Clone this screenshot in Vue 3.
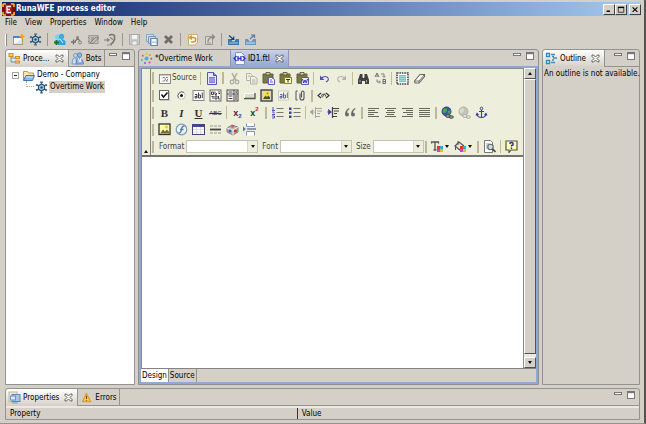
<script setup>
import { ref } from 'vue'

const icons = {
  app: '<rect width="13" height="13" fill="#7c0a10"/><path d="M1 1h3M9 1h3M1 12h3M9 12h3M1 1v3M12 1v3M1 9v3M12 9v3" stroke="#f0c030" stroke-width="1.6"/><rect x="3" y="2" width="7" height="9" fill="#c4141c"/><path d="M9 3.5H5v6h4M5 6.5h3" stroke="#fff" fill="none" stroke-width="1.3"/>',
  newfile: '<rect x="1.5" y="3.5" width="9" height="8" fill="#f4f8fd" stroke="#a89a68"/><path d="M1 4h8" stroke="#4c86c8" stroke-width="2"/><path d="M10 1v5M7.5 3.5h5" stroke="#e8a020" stroke-width="1.6"/><path d="M2 11L10 6v5z" fill="#d5e6f7"/>',
  gear: '<path d="M6.500 1v11M1.500 3.700l10 5.600M11.500 3.700l-10 5.600" stroke="#2c5878" stroke-width="1.100"/><path d="M6.500 3l3 1.700v3.600l-3 1.700-3-1.700V4.700z" fill="#a8c8dc" stroke="#24506f" stroke-width="1.200"/><circle cx="6.500" cy="6.500" r="1.200" fill="#24506f"/><path d="M5 1.200h3M5 11.800h3M1.200 5l1-2M10.800 3l1 2M1.200 8l1 2M10.800 10l1-2" stroke="#3c6c8c" stroke-width="1.200"/>',
  botadd: '<circle cx="4.500" cy="4" r="2.600" fill="#7fd0ee"/><circle cx="8.500" cy="3.500" r="2.700" fill="#38aee0"/><path d="M1 11V8q3-4 6 0v3z" fill="#8fd8f2"/><path d="M5 12V8q3-4 7.500 0v4z" fill="#2ea4dc"/><path d="M7 6l3 4" stroke="#dff5ff"/><path d="M3.500 7v5M1 9.500h5" stroke="#187828" stroke-width="2"/>',
  botplus: '<circle cx="7.500" cy="4.500" r="1.500" fill="#85827c"/><path d="M5 8l2.500-2 2.500 1.500M3.500 6.500v5M1 9h5" stroke="#77746e" stroke-width="1.300" fill="none"/><circle cx="10" cy="9.500" r="1.500" fill="none" stroke="#85827c"/>',
  chip: '<path d="M2 2.500h9v8H2z" fill="#c4c1ba" stroke="#9e9b95" stroke-width="1.200"/><path d="M3 10l6-6 2.500 1-5.500 5.500zM4 5h3M4 7h2" stroke="#85827c" fill="none"/><path d="M1 4.500h1M1 8.500h1M11 4.500h1" stroke="#8e8b85"/>',
  person: '<path d="M5 2.500q3-2 5.500 0v4q-1 3-4 5" stroke="#77746e" stroke-width="1.600" fill="none"/><path d="M0 7h5M3 5.500l2 1.500-2 1.500M6 4.500l3 2" stroke="#85827c" stroke-width="1.200" fill="none"/><path d="M3 12h5" stroke="#8e8b85"/>',
  save: '<path d="M1.500 1.500h10v10h-10z" fill="#c9c8c8" stroke="#a9a9ac"/><path d="M4 2h5v4H4z" fill="#f4f4f4"/><path d="M4 8h5v4H4z" fill="#eeeeee" stroke="#aaa" stroke-width=".6"/>',
  saveall: '<path d="M1.500 1.500h7v7h-7z" fill="#d9e2ea" stroke="#91a5b8"/><path d="M3.500 3.500h7v7h-7z" fill="#ccd9e4" stroke="#7896b0"/><path d="M5.500 5.500h7v7h-7z" fill="#b4c9da" stroke="#6488a8"/><path d="M7 6h4v2.500H7zM7 10h4v2H7z" fill="#fff"/>',
  cross: '<path d="M3 3l7 7M10 3l-7 7" stroke="#706d68" stroke-width="2.800"/>',
  undoDoc: '<path d="M2.500 1.500h9v8l-3 2.500h-6z" fill="#fffdf0" stroke="#c2b078"/><path d="M4 4.500h3.500a2 2 0 0 1 0 4.500H5M6 2.500L3.500 4.500 6 6.500" stroke="#d89a18" stroke-width="1.500" fill="none"/>',
  redoDoc: '<path d="M2.500 3.500h7v8h-7z" fill="#d9d6cf" stroke="#9b9892"/><path d="M5 9c0-4 2-5 6-5M9 1.500L11.500 4 9 6.500" stroke="#8e8b85" stroke-width="1.300" fill="none"/><path d="M4 10h4" stroke="#9b9892"/>',
  importT: '<path d="M1 6h3l1.500 2.500h2L9 6h3v6H1z" fill="#3c78b0"/><path d="M2 10h9" stroke="#a8c8e4"/><path d="M2 2.500l4 3.500M6.800 3.500v3H4" stroke="#203c68" stroke-width="1.200" fill="none"/>',
  exportT: '<path d="M1 6h3l1.500 2.500h2L9 6h3v6H1z" fill="#6c98c0"/><path d="M2 10h9" stroke="#d0e0ee"/><path d="M6 6l4-3.500M7 2h3.500v3" stroke="#5a7898" stroke-width="1.200" fill="none"/>',
  process: '<path d="M3 4v6h5M3 6h5" stroke="#6a8fb0" fill="none"/><rect x="1" y="1.500" width="4" height="3" fill="#f8cc70" stroke="#d08c28"/><rect x="7.500" y="4.500" width="4" height="2" fill="#f8cc70" stroke="#d08c28"/><rect x="7.500" y="9" width="4" height="2" fill="#f8cc70" stroke="#d08c28"/>',
  bots: '<circle cx="4.500" cy="3.500" r="2" fill="#bcd4ee" stroke="#7498c4"/><circle cx="8.500" cy="3" r="2.200" fill="#8eb4e0" stroke="#5c86bc"/><path d="M1 12q0-7 4-6l1 6z" fill="#cfe0f4" stroke="#7498c4"/><path d="M5 12q0-7 4-6 3 1 3.500 6z" fill="#8eb4e0" stroke="#5c86bc"/><path d="M7 6l2 4 1-4" stroke="#fff" fill="none"/>',
  sun: '<circle cx="6.500" cy="6.500" r="2" fill="#38b8e8"/><circle cx="6.500" cy="1.800" r="1" fill="#e8c020"/><circle cx="10" cy="3" r="1" fill="#f09030"/><circle cx="11.300" cy="6.800" r="1" fill="#e84848"/><circle cx="9.500" cy="10.500" r="1" fill="#c848b8"/><circle cx="5" cy="11" r="1" fill="#6868e0"/><circle cx="1.800" cy="8" r="1" fill="#48b0e0"/><circle cx="2.800" cy="3.800" r="1" fill="#e85858"/>',
  ftl: '<path d="M2.500.5h6l3 3v9h-9z" fill="#f6f8ff" stroke="#8894b8"/><path d="M3.500 4L1 6.500 3.500 9M9.500 4L12 6.500 9.500 9M5 4v5M8 4v5M5 6.500h3" stroke="#3030c8" stroke-width="1.300" fill="none"/>',
  outline: '<path d="M1.500 1.500h3v3h-3zM1.500 8.500h3v3h-3z" fill="#e8f4fc" stroke="#3088c0" stroke-width="1.300"/><path d="M6 2.500h4M8 6h4M6 10.500h4M7 4.500h2M7 8h2" stroke="#3e90c4" stroke-width="1.400"/>',
  props: '<rect x="1" y="1" width="8" height="10" fill="#f4ecc8" stroke="#c4b888"/><rect x="4" y="3.500" width="8" height="7" fill="#a8c8ea" stroke="#5888bc"/><rect x="2.500" y="5" width="5" height="4" fill="#d8e8f8" stroke="#6898c8"/><path d="M4 12h6" stroke="#7ca4cc"/>',
  warn: '<path d="M6.500 2.500L10.500 10.500h-8z" fill="#fcd468" stroke="#e0a038" stroke-width="1.600" stroke-linejoin="round"/><path d="M6.500 5v3M6.500 8.800v1" stroke="#86500c" stroke-width="1.200"/>',
  folder: '<path d="M1.500 11V2.500h4l1 1.500h5v3" fill="#fce8a8" stroke="#b89848"/><path d="M1.500 11.500l2.500-5h8.500l-2 5z" fill="#8cb8ec" stroke="#4474b0"/><path d="M4 8h7" stroke="#d8ecfc"/>',
  source: '<rect x=".5" y="2.500" width="11" height="9" fill="#fafaf4" stroke="#888"/><path d="M1 3h10" stroke="#999"/><path d="M3.500 5.500h2l1 1.500-1 2h-2M7 5.500h2M9 7l-2 2h2" stroke="#888" fill="none"/>',
  page: '<path d="M2.500.5h6l3 3v9h-9z" fill="#e8e8ff" stroke="#5858b8"/><path d="M8.500.5v3h3" fill="#9c9ce8" stroke="#4848b8"/><path d="M4 5h6v6H4z" fill="#7c7cdc"/><path d="M4 7h6M4 9h6" stroke="#b4b4f0"/>',
  cut: '<path d="M4 1l4 7.500M9 1L5 8.500" stroke="#aaa99e" stroke-width="1.400"/><circle cx="4" cy="10" r="1.800" fill="none" stroke="#aaa99e" stroke-width="1.200"/><circle cx="9" cy="10" r="1.800" fill="none" stroke="#aaa99e" stroke-width="1.200"/>',
  copy: '<path d="M1.500 1.500h4l2 2v5h-6z" fill="#efefe4" stroke="#b4b3a8"/><path d="M5.500 4.500h4l2.500 2v5.500H5.500z" fill="#efefe4" stroke="#b4b3a8"/><path d="M7 8h3.500M7 10h3.500M3 4h2" stroke="#b4b3a8"/>',
  paste: '<path d="M1 2h10v9H1z" fill="#787848" stroke="#606030"/><path d="M4 .5h4v2.500H4z" fill="#d0cca8" stroke="#505020" stroke-width=".8"/><path d="M6.500 5.500h3l3 2v5h-6z" fill="#fff" stroke="#5858b8"/><path d="M8 8h2M8 10h3" stroke="#5858b8"/>',
  pasteT: '<path d="M1 2h10v9H1z" fill="#787848" stroke="#606030"/><path d="M4 .5h4v2.500H4z" fill="#d0cca8" stroke="#505020" stroke-width=".8"/><path d="M5.500 5.500h7v6h-7z" fill="#ffffc0" stroke="#808030"/><path d="M7 7.500h4M9 7.500v3" stroke="#333"/>',
  pasteW: '<path d="M1 2h10v9H1z" fill="#787848" stroke="#606030"/><path d="M4 .5h4v2.500H4z" fill="#d0cca8" stroke="#505020" stroke-width=".8"/><path d="M5.500 5.500h7v7h-7z" fill="#e8e8ff" stroke="#5858b8"/><path d="M6.500 7l1.200 4L9 8l1.300 3 1.200-4" stroke="#3838a8" fill="none"/>',
  undo: '<path d="M3 6.500q3-3 6-1.500 2.500 2 .5 4L8 10" stroke="#5050b0" stroke-width="1.100" fill="none"/><path d="M2 3.500V8h4.500z" fill="#5050b0"/>',
  redo: '<path d="M10 6.500Q7 3.500 4 5q-2.500 2-.5 4L5 10" stroke="#b4b3a8" stroke-width="1.100" fill="none"/><path d="M11 3.500V8H6.500z" fill="#b4b3a8"/>',
  find: '<path d="M3 2h2.500v3L6 6h1l.5-1V2H10l2 6v4H8V9H5v3H1V8z" fill="#404040"/><path d="M3 8v2.500M9.500 8v2.500" stroke="#a4a49c"/>',
  replace: '<path d="M1 5l2-4 2 4M2 4h2M9 7.500h2.500v4H9M9 9.500h2.500M9 7v5" stroke="#606060" fill="none" stroke-width=".9"/><path d="M7 2h3v3M3 7.500V10h3M8.500 4L10 5.500 11.500 4M5 8.500L6.500 10 5 11.500" stroke="#77776e" fill="none" stroke-width=".9"/>',
  selectall: '<rect x="1" y="1" width="11" height="11" fill="#fff" stroke="#484848" stroke-width="1.600" stroke-dasharray="1.600 .8"/><rect x="3" y="3" width="7" height="7" fill="#78c4bc"/><path d="M3 4.500h7M3 6.500h7M3 8.500h7" stroke="#98dcd4"/>',
  eraser: '<path d="M1.500 9L7 2.500h4.500v2L6 11H2z" fill="#fff" stroke="#66665e" stroke-width="1.100"/><path d="M2 9h4l5.500-6.500M6 9v2" stroke="#66665e" fill="none" stroke-width=".9"/>',
  check: '<rect x="1.500" y="1.500" width="9" height="9" fill="#fff" stroke="#666"/><path d="M2 11.500h9.500V2" stroke="#c8c8b8" fill="none"/><path d="M3.500 5.500L5.500 8l4-4.500" stroke="#111" stroke-width="1.500" fill="none"/>',
  radio: '<circle cx="6.500" cy="6.500" r="3.700" fill="#fff" stroke="#c4c4b8"/><path d="M3.500 9A4 4 0 0 1 9 3.500" stroke="#666" fill="none"/><circle cx="6.500" cy="6.500" r="1.500" fill="#111"/>',
  textfield: '<rect x="1" y="1.500" width="11" height="10" fill="#fff" stroke="#888"/><path d="M3 5.500h2V9H3V7.500h2M6.500 3.500V9h2V6h-2M10.300 3.500V9" stroke="#333" fill="none" stroke-width=".9"/>',
  textarea: '<rect x="1" y="1" width="11" height="11" fill="#fff" stroke="#666"/><path d="M2.500 3h2v2.500h-2zM6 2.500v3h1.500V4M9 3h2M2.500 7.500h2M4 7v3M6 7h2v3H6zM9.500 7v3h1.500M9.500 4.500h1.500" stroke="#444" fill="none"/>',
  select: '<rect x="1" y="1" width="11" height="11" fill="#fff" stroke="#444"/><path d="M8 1v11M1 5h11" stroke="#444"/><path d="M9 2.500h2.500L10.200 4z" fill="#111"/><path d="M2.500 3h4M2.500 7h4M2.500 9.500h4" stroke="#444" stroke-width="1.200"/><path d="M9 6h2.500v5H9z" fill="#98988c"/>',
  button: '<path d="M1 4h11v5H1z" fill="#dedbd0"/><path d="M1 9.500h11V4" stroke="#55554e" fill="none" stroke-width="1.300"/><path d="M1.500 9V4.500H11" stroke="#fff" fill="none"/>',
  imgbtn: '<rect x="1" y="1" width="11" height="11" fill="#d8d4c4" stroke="#444" stroke-width="1.400"/><path d="M3 3h7v7H3z" fill="#f4e050"/><path d="M3 10l2.500-3.500 1.500 1.500 1.500-1.500 1.500 2V10z" fill="#505028"/><circle cx="7.500" cy="4.500" r="1" fill="#b08818"/>',
  hidden: '<rect x="1.500" y="2" width="10" height="9" fill="#f8f8f0" stroke="#ccccc0"/><path d="M3 5.500h2V9H3V7.500h2M6.500 3.500V9h2V6h-2M10.300 3.500V9" stroke="#55559c" fill="none" stroke-width=".9"/>',
  attach: '<path d="M3.500 2H2v9h1.500" stroke="#555" fill="none"/><path d="M6 4.500V9q0 2 2 2t2-2V3.500Q10 2 8.800 2T7.500 3.500v5" stroke="#555" stroke-width="1.100" fill="none"/>',
  tag: '<path d="M4 4L1 6.500 4 9M9 4l3 2.500L9 9" stroke="#333" fill="none" stroke-width="1.100"/><path d="M4.500 7.500q0-3 2.500-2.500t1.500 2.500M5 8.500l3-4" stroke="#444" fill="none" stroke-width=".9"/>',
  ol: '<path d="M2 1v3M1 4.500h3M1 6h2v1.500M1 8.500h3M1 10h2.500v2H1" stroke="#4444a8" fill="none" stroke-width=".9"/><path d="M5.500 2.500h7M5.500 6.500h7M5.500 10.500h7" stroke="#77776e"/>',
  ul: '<path d="M1 1.500h2.500V4H1zM1 5.500h2.500V8H1zM1 9.500h2.500V12H1z" fill="#3c3cb0"/><path d="M5.500 2.500h7M5.500 6.500h7M5.500 10.500h7" stroke="#77776e"/>',
  outdent: '<path d="M5 2.500h7M7 5h5M7 7.500h3M5 10.500h5M5.500 1v11" stroke="#a8a79c"/><path d="M0 6l3-2.500v5zM3 6h2" fill="#a8a79c" stroke="#a8a79c" stroke-width=".7"/>',
  indent: '<path d="M5 2.500h7M7 5h5M7 7.500h3M5 10.500h5M5.500 1v11" stroke="#404040" stroke-width="1.200"/><path d="M4.500 6l-3-2.500v5zM0 6h2" fill="#3c3ca0" stroke="#3c3ca0" stroke-width=".7"/>',
  quote: '<path d="M5 2Q1 4 1 8.500A2 2 0 1 0 3 6.500Q3 4.500 5.500 3zM11 2Q7 4 7 8.500A2 2 0 1 0 9 6.500Q9 4.500 11.500 3z" fill="#6c6c64"/>',
  left: '<path d="M1 2.500h11M1 4.500h7M1 6.500h10M1 8.500h6M1 10.500h11" stroke="#68685f"/>',
  center: '<path d="M1 2.500h11M3 4.500h7M2 6.500h9M3 8.500h7M1 10.500h11" stroke="#68685f"/>',
  right: '<path d="M1 2.500h11M5 4.500h7M2 6.500h10M6 8.500h6M1 10.500h11" stroke="#68685f"/>',
  justify: '<path d="M1 2.500h11M1 4.500h11M1 6.500h11M1 8.500h11M1 10.500h11" stroke="#68685f"/>',
  link: '<circle cx="5.500" cy="5.500" r="4.500" fill="#3858b8" stroke="#283c78"/><path d="M3 2.500q3-1 3 1.500T3.500 7 2 4zM7 5l2.500-1v3L7.500 8z" fill="#48a848"/><ellipse cx="7" cy="10" rx="2.400" ry="1.400" fill="#a4a49a" stroke="#444"/><ellipse cx="10.300" cy="11" rx="2" ry="1.300" fill="#a4a49a" stroke="#444"/>',
  unlink: '<circle cx="5.500" cy="5.500" r="4.500" fill="#c4c3b8" stroke="#b0afa4"/><path d="M3 2.500q3-1 3 1.500T3.500 7 2 4z" fill="#dcdbd0"/><ellipse cx="7" cy="10" rx="2.400" ry="1.400" fill="#eeeedd" stroke="#aaa99e"/><ellipse cx="10.300" cy="11" rx="2" ry="1.300" fill="#eeeedd" stroke="#aaa99e"/>',
  anchor: '<circle cx="6.500" cy="2.500" r="1.300" fill="none" stroke="#3c3ca4"/><path d="M6.500 4v7.500M4 5.500h5M2 8q.5 3.500 4.500 3.500T11 8M1 9.500L2 7.500l1.500 1.500M9.500 9L11 7.500l1 2" stroke="#3c3ca4" stroke-width="1.100" fill="none"/>',
  image: '<rect x="1" y="1" width="11" height="10.500" fill="#fff8b0" stroke="#333" stroke-width="1.300"/><path d="M2 10.500l3-4 2 2 2-2 2.500 3v1z" fill="#707030"/><circle cx="8.500" cy="4" r="1.600" fill="#f0c828"/>',
  flash: '<circle cx="6.500" cy="6.500" r="5.300" fill="#eaf2fa" stroke="#8098ac" stroke-width="1.200"/><path d="M9.500 3q-3 0-3.300 4.500Q6 10 3.500 10.200M5 6.500h3.500" stroke="#5880a4" stroke-width="1.300" fill="none"/>',
  table: '<rect x=".5" y="1.500" width="12" height="10" fill="#fff" stroke="#444478"/><path d="M1 3h11" stroke="#4444a8" stroke-width="2"/><path d="M1 6.500h11M1 9h11M4.500 4v7M8.500 4v7" stroke="#dcdce8"/>',
  hr: '<path d="M1 3h3M5 3h3M9 3h3M1 10h3M5 10h3M9 10h3" stroke="#98988c"/><path d="M1 6.500h11" stroke="#444" stroke-width="1.800"/>',
  smiley: '<path d="M1 5l5-3 6 2v5l-5 3-6-3z" fill="#b8b4ac" stroke="#88847c"/><path d="M1 5l6 2 5-3M7 7v5" stroke="#f0eee6" fill="none"/><circle cx="4" cy="8" r="1.500" fill="#4858c8"/><circle cx="9.500" cy="8" r="1.600" fill="#c83838"/><circle cx="6.500" cy="3.500" r="1.300" fill="#d05868"/>',
  pagebreak: '<path d="M3.500.5v3h8v-3M3.500 12.500v-4h8v4" fill="#fff" stroke="#8098b8"/><path d="M4 6h9" stroke="#587898" stroke-width="1.400"/><path d="M0 3.500L3 6 0 8.500z" fill="#4c7cb4"/>',
  textcolor: '<path d="M0 2h8M.5 1.500v2M7.500 1.500v2M4 2v8M2.500 10h3" stroke="#555" stroke-width="1.300"/><path d="M6 6h3v3H6z" fill="#d83838"/><path d="M9 6h3v3H9z" fill="#30b0c8"/><path d="M6 9h3v3H6z" fill="#d040c8"/><path d="M9 9h3v3H9z" fill="#d8c030"/>',
  bgcolor: '<path d="M1 6l4-4 4.500 3.500-4 4.500z" fill="#e4e3d8" stroke="#555" stroke-width="1.200"/><path d="M4 1v4M1.500 6v4" stroke="#555"/><path d="M6 6h3v3H6z" fill="#d83838"/><path d="M9 6h3v3H9z" fill="#30b0c8"/><path d="M6 9h3v3H6z" fill="#d040c8"/><path d="M9 9h3v3H9z" fill="#d8c030"/>',
  preview: '<path d="M1.500.5h6l2 2v10h-8z" fill="#fff" stroke="#777"/><path d="M3 4h4M3 6h2M3 8h2" stroke="#999"/><circle cx="7.500" cy="7" r="2.700" fill="#c4e0e8" stroke="#666" stroke-width="1.100"/><path d="M9.500 9l3 3" stroke="#444" stroke-width="1.700"/>',
  help: '<path d="M1 1h11v9H6l-2 2.500V10H1z" fill="#ffffb8" stroke="#555540" stroke-width="1.200"/><path d="M4.800 4q0-1.500 1.700-1.500T8.200 4 6.500 5.500v1M6.500 7.500V9" stroke="#2828b0" stroke-width="1.400" fill="none"/>',
  close: '<path d="M3 3h1.500l2 2 2-2H10v1.500l-2 2 2 2V10H8.500l-2-2-2 2H3V8.500l2-2-2-2z" fill="#f8f7f3" stroke="#55534e" stroke-width=".9"/>',
  min: '<rect x="2.500" y="3.500" width="7" height="2" fill="#fff" stroke="#777"/>',
  max: '<rect x="2.500" y="2.500" width="7" height="7" fill="#fff" stroke="#777"/><path d="M2 3.500h8" stroke="#777" stroke-width="1.400"/>',
  wmin: '<path d="M3 9h5" stroke="#000" stroke-width="2"/>',
  wmax: '<path d="M2.500 3.500h8v7h-8z" stroke="#000" fill="none"/><path d="M2 3.500h9" stroke="#000" stroke-width="2"/>',
  wclose: '<path d="M3 3.500l7 6.500M10 3.500L3 10" stroke="#000" stroke-width="1.600"/>',
}

const menus = ['File', 'View', 'Properties', 'Window', 'Help']

const mainBar = [
  ['newfile', 'New'], ['gear', 'New process'], '|',
  ['botadd', 'New bot station'], ['botplus', 'New bot'], ['chip', 'New task'], ['person', 'Assign'], '|',
  ['save', 'Save'], ['saveall', 'Save all'], ['cross', 'Delete'], '|',
  ['undoDoc', 'Undo'], ['redoDoc', 'Redo'], '|',
  ['importT', 'Import'], ['exportT', 'Export'],
]

const editorRows = [
  ['src', '|', ['page', 'New page'], '#', ['cut', 'Cut'], ['copy', 'Copy'], ['paste', 'Paste'], ['pasteT', 'Paste as text'], ['pasteW', 'Paste from Word'], '|',
    ['undo', 'Undo'], ['redo', 'Redo'], '|', ['find', 'Find'], ['replace', 'Replace'], '|', ['selectall', 'Select all'], ['eraser', 'Remove format']],
  [['check', 'Checkbox'], ['radio', 'Radio button'], ['textfield', 'Text field'], ['textarea', 'Text area'], ['select', 'Selection'], ['button', 'Button'],
    ['imgbtn', 'Image button'], ['hidden', 'Hidden field'], ['attach', 'File field'], '#', ['tag', 'Insert tag']],
  [['t:B', 'Bold', 'b'], ['t:I', 'Italic', 'i'], ['t:U', 'Underline', 'u'], ['t:ABC', 'Strike', 's'], '|', ['t:x', 'Subscript', 'sub', '2'], ['t:x', 'Superscript', 'sup', '2'], '#',
    ['ol', 'Numbered list'], ['ul', 'Bulleted list'], '|', ['outdent', 'Outdent'], ['indent', 'Indent'], ['quote', 'Block quote'], '#',
    ['left', 'Align left'], ['center', 'Center'], ['right', 'Align right'], ['justify', 'Justify'], '#',
    ['link', 'Link'], ['unlink', 'Unlink'], ['anchor', 'Anchor']],
  [['image', 'Image'], ['flash', 'Flash'], ['table', 'Table'], ['hr', 'Horizontal line'], ['smiley', 'Smiley'], ['pagebreak', 'Page break']],
]

const combos = [
  { id: 'format', label: 'Format', size: 'wide' },
  { id: 'font', label: 'Font', size: 'wide' },
  { id: 'size', label: 'Size', size: 'narrow' },
]

const content = ref('')
</script>

<template>
  <div class="window">
    <header class="titlebar">
      <svg class="ic" viewBox="0 0 13 13" v-html="icons.app"></svg>
      <h1>RunaWFE process editor</h1>
      <div class="winbtns">
        <button v-for="b in [['wmin', 'Minimize'], ['wmax', 'Maximize'], ['wclose', 'Close']]" :key="b[0]" :class="b[0]" :aria-label="b[1]">
          <svg viewBox="0 0 13 13" v-html="icons[b[0]]"></svg>
        </button>
      </div>
    </header>

    <nav class="menubar">
      <button v-for="m in menus" :key="m">{{ m }}</button>
    </nav>

    <div class="toolbar">
      <span class="grip"></span>
      <template v-for="(t, i) in mainBar" :key="i">
        <span v-if="t === '|'" class="sep"></span>
        <button v-else class="tool" :aria-label="t[1]"><svg class="ic" viewBox="0 0 13 13" v-html="icons[t[0]]"></svg></button>
      </template>
    </div>

    <main class="work">
      <section class="panel">
        <div class="tabs">
          <button class="tab active"><svg class="ic" viewBox="0 0 13 13" v-html="icons.process"></svg>Proce...<svg class="ic x" viewBox="0 0 13 13" v-html="icons.close"></svg></button>
          <button class="tab last"><svg class="ic" viewBox="0 0 13 13" v-html="icons.bots"></svg>Bots</button>
          <div class="ctl">
            <button aria-label="Minimize"><svg class="ic" viewBox="0 0 13 13" v-html="icons.min"></svg></button>
            <button aria-label="Maximize"><svg class="ic" viewBox="0 0 13 13" v-html="icons.max"></svg></button>
          </div>
        </div>
        <ul class="tree">
          <li>
            <div class="node"><span class="toggle"></span><svg class="ic" viewBox="0 0 13 13" v-html="icons.folder"></svg><span class="label">Demo - Company</span></div>
            <ul>
              <li class="node child"><span class="elbow"></span><svg class="ic" viewBox="0 0 13 13" v-html="icons.gear"></svg><span class="label selected">Overtime Work</span></li>
            </ul>
          </li>
        </ul>
      </section>

      <section class="panel editor">
        <div class="tabs">
          <button class="tab doc"><svg class="ic" viewBox="0 0 13 13" v-html="icons.sun"></svg>*Overtime Work</button>
          <button class="tab current"><svg class="ic" viewBox="0 0 13 13" v-html="icons.ftl"></svg>ID1.ftl<svg class="ic x" viewBox="0 0 13 13" v-html="icons.close"></svg></button>
          <div class="ctl">
            <button aria-label="Minimize"><svg class="ic" viewBox="0 0 13 13" v-html="icons.min"></svg></button>
            <button aria-label="Maximize"><svg class="ic" viewBox="0 0 13 13" v-html="icons.max"></svg></button>
          </div>
        </div>
        <div class="frame">
          <div class="pane">
            <div class="richbar">
              <button class="collapse" aria-label="Collapse toolbar"><span class="up"></span></button>
              <div class="rows">
                <div v-for="(row, r) in editorRows" :key="r" class="row">
                  <span class="bar"></span>
                  <template v-for="(t, i) in row" :key="i">
                    <button v-if="t === 'src'" class="src"><svg class="ic" viewBox="0 0 13 13" v-html="icons.source"></svg>Source</button>
                    <span v-else-if="t === '|'" class="line"></span>
                    <span v-else-if="t === '#'" class="bar mid"></span>
                    <button v-else-if="t[2]" class="tool glyph" :class="'g-' + t[2]" :aria-label="t[1]">{{ t[0].slice(2) }}<small v-if="t[3]">{{ t[3] }}</small></button>
                    <button v-else class="tool" :aria-label="t[1]"><svg class="ic" viewBox="0 0 13 13" v-html="icons[t[0]]"></svg></button>
                  </template>
                </div>
                <div class="row">
                  <span class="bar"></span>
                  <div v-for="c in combos" :key="c.id" class="combo">
                    <label :for="c.id">{{ c.label }}</label>
                    <div class="box" :class="c.size">
                      <select :id="c.id"><option></option></select>
                      <span class="drop"><span class="down"></span></span>
                    </div>
                  </div>
                  <span class="bar"></span>
                  <button class="tool split" aria-label="Text color"><svg class="ic" viewBox="0 0 13 13" v-html="icons.textcolor"></svg><span class="down"></span></button>
                  <button class="tool split" aria-label="Background color"><svg class="ic" viewBox="0 0 13 13" v-html="icons.bgcolor"></svg><span class="down"></span></button>
                  <span class="bar mid"></span>
                  <button class="tool" aria-label="Preview"><svg class="ic" viewBox="0 0 13 13" v-html="icons.preview"></svg></button>
                  <span class="line"></span>
                  <button class="tool" aria-label="Help"><svg class="ic" viewBox="0 0 13 13" v-html="icons.help"></svg></button>
                </div>
              </div>
            </div>
            <textarea v-model="content" aria-label="Document"></textarea>
          </div>
          <div class="scroll">
            <button aria-label="Scroll up"><span class="up"></span></button>
            <span class="thumb"></span>
            <button aria-label="Scroll down"><span class="down"></span></button>
          </div>
        </div>
        <div class="pages">
          <button class="on">Design</button>
          <button>Source</button>
        </div>
      </section>

      <section class="panel">
        <div class="tabs">
          <button class="tab active"><svg class="ic" viewBox="0 0 13 13" v-html="icons.outline"></svg>Outline<svg class="ic x" viewBox="0 0 13 13" v-html="icons.close"></svg></button>
          <div class="ctl">
            <button aria-label="Minimize"><svg class="ic" viewBox="0 0 13 13" v-html="icons.min"></svg></button>
            <button aria-label="Maximize"><svg class="ic" viewBox="0 0 13 13" v-html="icons.max"></svg></button>
          </div>
        </div>
        <p class="note">An outline is not available.</p>
      </section>
    </main>

    <section class="panel bottom">
      <div class="tabs">
        <button class="tab active"><svg class="ic" viewBox="0 0 13 13" v-html="icons.props"></svg>Properties<svg class="ic x" viewBox="0 0 13 13" v-html="icons.close"></svg></button>
        <button class="tab last"><svg class="ic" viewBox="0 0 13 13" v-html="icons.warn"></svg>Errors</button>
        <div class="ctl">
          <button aria-label="Minimize"><svg class="ic" viewBox="0 0 13 13" v-html="icons.min"></svg></button>
          <button aria-label="Maximize"><svg class="ic" viewBox="0 0 13 13" v-html="icons.max"></svg></button>
        </div>
      </div>
      <table class="props">
        <thead><tr><th>Property</th><th>Value</th></tr></thead>
      </table>
    </section>
  </div>
</template>

<style>
body { margin: 0; background: #d4d0c8; }
</style>

<style scoped>
* { box-sizing: border-box; }
button, select, textarea { font: inherit; color: inherit; border: 0; padding: 0; margin: 0; background: none; border-radius: 0; }
.window {
  display: flex; flex-direction: column; height: 100vh; min-height: 300px;
  padding: 2px 3px 3px 2px; background: #d4d0c8; color: #000;
  border-right: 2px solid #55534f; border-bottom: 1px solid #96938c;
  font: 8px/12px "DejaVu Sans Condensed", "DejaVu Sans", sans-serif;
}
.ic { display: block; width: 13px; height: 13px; flex: none; }
.titlebar { display: flex; align-items: center; gap: 1px; height: 14px; background: linear-gradient(90deg, #0a246a, #a6caf0); }
.titlebar h1 { flex: 1; margin: 0; color: #fff; font-size: 8px; line-height: 14px; font-weight: bold; }
.winbtns { display: flex; }
.winbtns button { width: 12px; height: 11px; background: #d4d0c8; border: 1px solid; border-color: #fff #404040 #404040 #fff; }
.winbtns svg { display: block; width: 10px; height: 9px; }
.winbtns .wclose { margin-left: 2px; }
.menubar { display: flex; gap: 8px; height: 14px; padding: 0 3px; }
.menubar button { line-height: 14px; }
.toolbar { display: flex; align-items: center; height: 19px; padding-left: 3px; }
.tool { display: flex; align-items: center; justify-content: center; width: 17px; height: 17px; flex: none; }
.grip { width: 2px; height: 12px; margin-right: 3px; background: #fff; border-right: 1px solid #8c8982; }
.sep { width: 1px; height: 13px; margin: 0 3px; background: #9b9891; }

.work { flex: 1; min-height: 0; display: grid; grid-template-columns: 130px minmax(0, 1fr) 98px; gap: 3px; padding: 0 1px 0 3px; }
.panel { display: flex; flex-direction: column; min-width: 0; min-height: 0; border: 1px solid #93948f; border-radius: 3px 3px 0 0; }
.tabs { display: flex; height: 17px; flex: none; border-bottom: 1px solid #93948f; }
.tab { display: flex; align-items: center; gap: 2px; height: 16px; padding: 1px 2px 0; white-space: nowrap; }
.tab .x { margin-left: 1px; }
.tab.active { height: 17px; padding-top: 0; background: linear-gradient(#fff, #d4d0c8); border-right: 1px solid #93948f; border-radius: 3px 0 0 0; }
.tab.last { border-right: 1px solid #93948f; }
.ctl { display: flex; margin-left: auto; padding-right: 1px; }
.ctl button { height: 13px; }
.tree { flex: 1; margin: 0; padding: 2px 0 0 6px; background: #fff; list-style: none; }
.tree ul { margin: 0; padding: 0; list-style: none; }
.node { display: flex; align-items: center; gap: 1px; height: 12px; }
.node .label { white-space: nowrap; padding: 0 1px; }
.toggle { width: 7px; height: 7px; margin-right: 2px; border: 1px solid #a4a4a4; background: linear-gradient(#222, #222) center / 3px 1px no-repeat #fff; }
.child { padding-left: 22px; }
.elbow { width: 8px; height: 6px; margin: 0 0 6px -8px; border: 1px dotted #aaa; border-width: 0 0 1px 1px; }
.selected { background: #d4d0c8; }

.tab.doc { width: 91px; padding-left: 1px; }
.tab.current { height: 17px; padding-top: 0; background: linear-gradient(#c9d3e8, #91a6d4); border: 1px solid #8b97b4; border-width: 0 1px; }
.editor { border: 1px solid #8d8f94; box-shadow: inset 0 -2px 0 #94a8d4, inset 2px 0 0 #94a8d4, inset -2px 0 0 #94a8d4; padding: 0 2px 2px; }
.editor .tabs { height: 18px; margin: 0 -2px; background: #d4d0c8; border-bottom: 2px solid #91a6d4; border-radius: 3px 3px 0 0; }
.frame { flex: 1; min-height: 0; display: flex; border-bottom: 1px solid #848484; }
.pane { flex: 1; min-width: 0; display: flex; flex-direction: column; border: 1px solid #8c8c84; border-width: 1px 1px 0 1px; }
.richbar { display: flex; background: #eeeedd; border-bottom: 2px solid #73736c; color: #44443e; }
.collapse { width: 9px; display: flex; align-items: flex-end; justify-content: center; border-right: 1px solid #84847c; padding-bottom: 2px; }
.rows { flex: 1; min-width: 0; padding-left: 1px; }
.row { display: flex; align-items: center; height: 17px; }
.row:first-child { height: 18px; }
.bar { width: 2px; height: 12px; margin: 0 2px 0 0; background: #bdb698; flex: none; }
.bar.mid { margin: 0 2px; }
.line { width: 1px; height: 13px; margin: 0 2px; background: #c4bd94; flex: none; }
.src { display: flex; align-items: center; padding: 0 1px 0 3px; height: 17px; }
.glyph { font-family: "Liberation Serif", serif; font-size: 11px; line-height: 12px; font-weight: bold; color: #333; }
.g-i { font-style: italic; }
.g-u { text-decoration: underline; }
.g-s { font-family: "Liberation Sans", sans-serif; font-size: 6px; font-weight: normal; text-decoration: line-through; }
.g-sub, .g-sup { font-family: "Liberation Sans", sans-serif; font-size: 9px; }
.glyph small { font-size: 6px; line-height: 6px; color: #c03030; }
.g-sub small { align-self: flex-end; color: #3838b8; margin-bottom: 2px; }
.g-sup small { align-self: flex-start; margin-top: 2px; }
.combo { display: flex; align-items: center; gap: 2px; padding: 0 1px 0 3px; }
.box { display: flex; height: 13px; border: 1px solid #c4c4b0; background: #fff; }
.box.wide { width: 72px; }
.box.narrow { width: 51px; }
.box select { flex: 1; min-width: 0; appearance: none; }
.drop { width: 10px; display: flex; align-items: center; justify-content: center; background: #eeeedd; border-left: 1px solid #d8d8c4; pointer-events: none; }
.down, .up { width: 0; height: 0; border: 2px solid transparent; }
.down { border-top: 3px solid #111; border-bottom: 0; }
.up { border-bottom: 3px solid #111; border-top: 0; }
.split { width: 23px; gap: 1px; }
textarea { display: block; flex: 1; width: 100%; min-height: 0; background: #fff; resize: none; outline: none; }
.scroll { width: 12px; display: flex; flex-direction: column; background: #ece9e2; }
.scroll button { height: 11px; display: flex; align-items: center; justify-content: center; }
.scroll button, .thumb { background: #d4d0c8; border: 1px solid; border-color: #fff #55534f #55534f #fff; }
.thumb { flex: 1; margin-bottom: 3px; }
.pages { display: flex; height: 13px; flex: none; }
.pages button { padding: 0 1px; border-right: 1px solid #93948f; }
.pages .on { background: #fff; }

.note { margin: 0; padding: 1px 0 0 1px; white-space: nowrap; }
.bottom { margin: 3px 1px 0 3px; flex: none; }
.props { width: 100%; border-collapse: collapse; table-layout: fixed; border-top: 2px solid #ece9e2; }
.props th { font-weight: normal; text-align: left; height: 12px; line-height: 11px; padding: 0 0 0 4px; }
.props th:first-child { width: 46%; border-right: 1px solid #333; }
</style>
